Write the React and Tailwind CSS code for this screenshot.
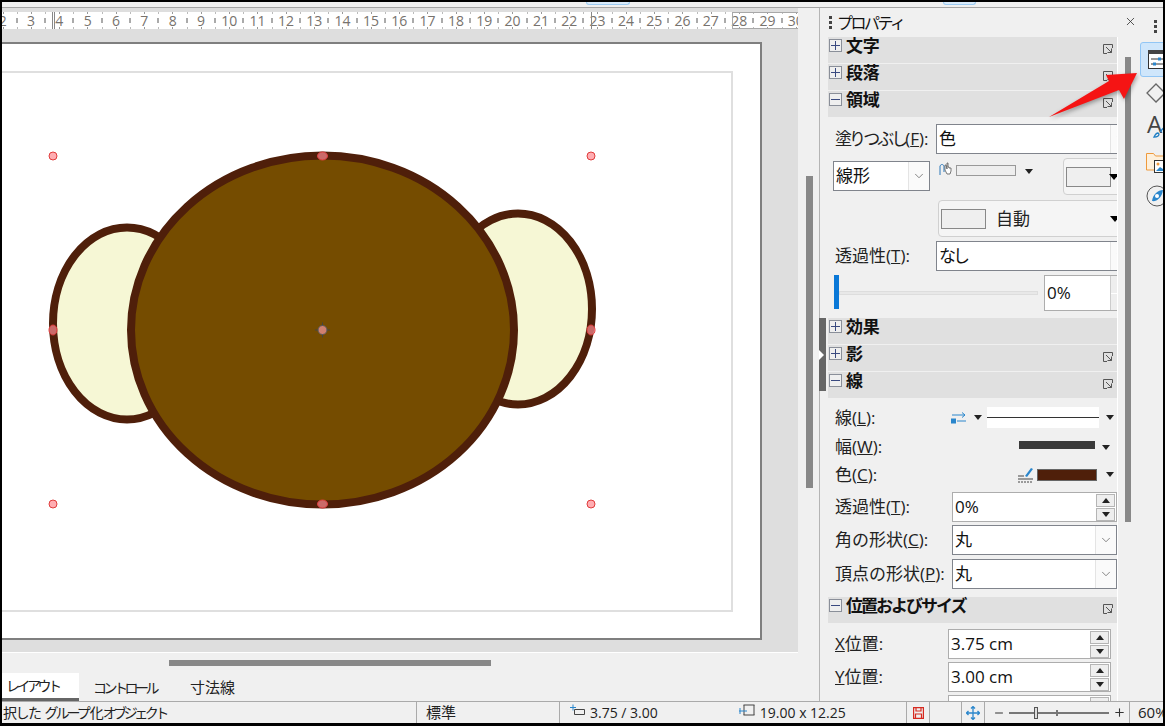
import { ChevronDown, Minus, Plus, X } from "lucide-react";

const rulerNums = [2, 3, 4, 5, 6, 7, 8, 9, 10, 11, 12, 13, 14, 15, 16, 17, 18, 19, 20, 21, 22, 23, 24, 25, 26, 27, 28, 29, 30];
const handles = [[53, 156], [591, 156], [53, 330], [591, 330], [53, 504], [591, 504]];

function Tri({ className = "" }) {
  return <span className={"block h-0 w-0 shrink-0 border-x-[4px] border-t-[5px] border-x-transparent border-t-[#222] " + className}></span>;
}

function Grip() {
  return (
    <div className="flex flex-col gap-[2px]">
      <span className="h-[3px] w-[3px] bg-[#444]"></span>
      <span className="h-[3px] w-[3px] bg-[#444]"></span>
      <span className="h-[3px] w-[3px] bg-[#444]"></span>
    </div>
  );
}

function SectionHead({ title, open, more = true, className = "", titleClass = "tracking-[-0.3px]" }) {
  return (
    <div className={"relative flex h-[27px] items-start border-b border-[#f0f0f0] bg-[#e0e0e0] " + className}>
      <span className="ml-px mt-[2px] flex h-[13px] w-[13px] items-center justify-center border border-[#8a8f99] bg-[#efefef]">
        <span className="relative block h-px w-[9px] bg-[#3a4a80]">
          {!open && <span className="absolute left-[4px] top-[-4px] block h-[9px] w-px bg-[#3a4a80]"></span>}
        </span>
      </span>
      <span className={"ml-[4px] mt-[-3.5px] text-[17px] font-bold leading-[24px] text-[#111] " + titleClass}>{title}</span>
      {more && (
        <svg className="absolute left-[275px] top-[7px]" width="10" height="10" viewBox="0 0 10 10" fill="none" stroke="#555">
          <path d="M9.5 4V.5H.5v9H4" />
          <path d="M3 3l5.5 5.5M8.500 4.500v4h-4" />
        </svg>
      )}
    </div>
  );
}

function Select({ value, className = "", box = "w-[196px]" }) {
  return (
    <div className={"flex h-[30px] shrink-0 border border-[#80848c] bg-white " + box + " " + className}>
      <span className="pl-[2px] text-[17px] leading-[28px] text-[#111]">{value}</span>
      <span className="ml-auto flex w-[21px] shrink-0 items-center justify-center border-l border-[#e4e4e4] bg-[#fafafa]">
        <ChevronDown size={14} strokeWidth={1.200} color="#555" />
      </span>
    </div>
  );
}

function Spin({ value, className = "" }) {
  return (
    <div className={"flex h-[30px] shrink-0 border border-[#adadad] bg-white " + className}>
      <span className="pl-[2px] text-[17px] leading-[28px] text-[#111]">{value}</span>
      <span className="ml-auto mr-px mt-px flex w-[19px] shrink-0 flex-col gap-px">
        <span className="flex h-[13px] items-center justify-center border border-[#b5b5b5] bg-[#eeeeee]">
          <Tri className="rotate-180" />
        </span>
        <span className="flex h-[13px] items-center justify-center border border-[#b5b5b5] bg-[#eeeeee]">
          <Tri />
        </span>
      </span>
    </div>
  );
}

function Label({ children, className = "" }) {
  return <span className={"shrink-0 whitespace-nowrap pl-[7px] text-[17px] leading-[24px] text-[#222] " + className}>{children}</span>;
}

function Drawing() {
  return (
    <svg className="absolute inset-0" width="757" height="594" viewBox="2 44 757 594">
      <ellipse cx="127" cy="323.500" rx="74" ry="96" fill="#f6f7d5" stroke="#4f1f0a" strokeWidth="8" />
      <ellipse cx="518" cy="309" rx="74" ry="95.500" fill="#f6f7d5" stroke="#4f1f0a" strokeWidth="8" />
      <ellipse cx="322.500" cy="330" rx="191.500" ry="174.500" fill="#754c00" stroke="#4f1f0a" strokeWidth="8" />
      {handles.map(([x, y]) => (
        <ellipse key={x + "-" + y} cx={x} cy={y} rx="4" ry={y === 330 ? 5 : 4} fill="#ff8a92" fillOpacity="0.7" stroke="#e03c3c" strokeWidth="1" />
      ))}
      <ellipse cx="322.500" cy="156" rx="5" ry="4" fill="#ff8a92" fillOpacity="0.7" stroke="#e03c3c" strokeWidth="1" />
      <ellipse cx="322.500" cy="504" rx="5" ry="4" fill="#ff8a92" fillOpacity="0.7" stroke="#e03c3c" strokeWidth="1" />
      <path d="M322.500 322.500v15M315 330h15" stroke="#444" strokeWidth="1" />
      <circle cx="322.500" cy="330" r="4.500" fill="#d08070" stroke="#555" strokeWidth="1" />
    </svg>
  );
}

function Ruler() {
  return (
    <div className="relative flex h-[17px] overflow-hidden bg-white">
      <div className="ml-[-13.5px] flex shrink-0">
        {rulerNums.map((n) => (
          <span key={n} className="relative w-[28.33px] shrink-0 text-center text-[14px] leading-[17px] text-[#77726d]">
            {n}
            <span className="absolute right-[-1px] top-[6px] h-[5px] w-[2px] bg-[#aaa]"></span>
            <span className="absolute left-[14px] top-0 h-[2px] w-px bg-[#999]"></span>
            <span className="absolute left-[14px] bottom-0 h-[2px] w-px bg-[#999]"></span>
            <span className="absolute left-0 top-0 h-[2px] w-px bg-[#bbb]"></span>
            <span className="absolute left-0 bottom-0 h-[2px] w-px bg-[#bbb]"></span>
          </span>
        ))}
      </div>
      <span className="absolute left-[50px] top-0 h-full w-[3px] border-x border-[#888]"></span>
      <span className="absolute left-[589px] top-0 h-full w-px bg-[#888]"></span>
      <span className="absolute left-[730px] top-0 h-full w-[67px] border border-r-0 border-[#a8a8a8]"></span>
    </div>
  );
}

function TabBar() {
  return (
    <div className="flex w-[23px] shrink-0 flex-col overflow-hidden">
      <div className="ml-[14px] mt-[12px]">
        <Grip />
      </div>
      <div className="mt-[9px] flex h-[35px] w-[40px] shrink-0 items-center rounded-l-[3px] border border-[#92c6f5] bg-[#cfe6fb] pl-[7px]">
        <svg width="22" height="19" viewBox="0 0 22 19" className="shrink-0">
          <rect x=".5" y=".5" width="21" height="18" fill="#fff" stroke="#333" />
          <rect x="0" y="0" width="22" height="4" fill="#444" />
          <path d="M3 9h12M3 14h12" stroke="#333" />
          <rect x="10" y="7.500" width="3" height="3" fill="#2a86cc" />
          <rect x="5" y="12.500" width="3" height="3" fill="#2a86cc" />
        </svg>
      </div>
      <svg className="ml-[5px] mt-[5px] shrink-0" width="22" height="22" viewBox="0 0 22 22" fill="none" stroke="#666" strokeWidth="1.300">
        <path d="M11 2l9 9-9 9-9-9z" />
      </svg>
      <div className="relative ml-[7px] mt-[7px] h-[28px] shrink-0">
        <span className="text-[24px] leading-[26px] text-[#444]">A</span>
        <svg className="absolute left-[5px] top-[12px]" width="16" height="16" viewBox="0 0 16 16" fill="none" stroke="#1f7fc4" strokeWidth="1.300">
          <path d="M2 14c3 0 5-1 5-3l-1-1c-2 0-3 2-4 4zM8 9l7-8" />
        </svg>
      </div>
      <svg className="ml-[6px] mt-[12px] shrink-0" width="22" height="22" viewBox="0 0 22 22">
        <path d="M.5 19V2.500h7l2 2.500h12v14z" fill="#fdf0dc" stroke="#ef9a3c" />
        <rect x="8.500" y="9.500" width="13" height="12" fill="#fff" stroke="#333" />
        <circle cx="12" cy="13" r="1.500" fill="#ef9a3c" />
        <path d="M10 20l4-4 3 2 4-4v6z" fill="#2a86cc" />
      </svg>
      <svg className="ml-[6px] mt-[12px] shrink-0" width="22" height="22" viewBox="0 0 22 22" fill="none">
        <circle cx="11" cy="11" r="10" stroke="#555" />
        <path d="M17 5c-5 0-10 4-11 11 4 1 10-3 11-11z" fill="#2a86cc" />
        <circle cx="11" cy="11" r="2" fill="#fff" />
      </svg>
    </div>
  );
}

function StatusBar() {
  return (
    <div className="flex h-[22px] shrink-0 border-t border-[#aaa] bg-[#f0f0f0] text-[14px] leading-[21px] text-[#222]">
      <div className="w-[414px] shrink-0 overflow-hidden whitespace-nowrap pl-px">
        <span className="tracking-[-1.500px]">択した</span>
        <span className="ml-[4px] tracking-[-3px]">グループ</span>
        <span className="ml-[2px] tracking-[-1px]">化</span>
        <span className="tracking-[-3.500px]">オブジェクト</span>
      </div>
      <div className="w-[143px] shrink-0 border-l border-[#aaa] pl-[9px] text-[15px]">標準</div>
      <div className="flex w-[347px] shrink-0 items-center border-l border-[#aaa] pl-[10px]">
        <svg className="mt-[-5px]" width="15" height="12" viewBox="0 0 15 12" fill="none">
          <path d="M0 3.500h6M3 .5v6" stroke="#2a86cc" />
          <path d="M4.500 5.500h10v5h-10z" stroke="#444" fill="#f0f0f0" />
        </svg>
        <span className="ml-[5px]">3.75 / 3.00</span>
        <svg className="ml-[81px] mt-[-4px]" width="16" height="14" viewBox="0 0 16 14" fill="none">
          <path d="M4.500 1h11M4.500 11h11M5 1v10M15 1v10" stroke="#444" />
          <path d="M0 7h8M1 4v6" stroke="#2a86cc" />
        </svg>
        <span className="ml-[5px]">19.00 x 12.25</span>
      </div>
      <div className="flex w-[23px] shrink-0 items-center justify-center border-l border-[#aaa]">
        <svg width="11" height="12" viewBox="0 0 11 12" fill="none" stroke="#d62a20" strokeWidth="1.200">
          <path d="M.6.6h9.800v10.800H.6zM3 .6v3.400h5V.6M2.500 11.400V7h6v4.400" />
        </svg>
      </div>
      <div className="w-[32px] shrink-0 border-l border-[#aaa]"></div>
      <div className="flex w-[23px] shrink-0 items-center justify-center border-l border-[#aaa]">
        <svg width="14" height="14" viewBox="0 0 14 14" fill="none" stroke="#2a86cc" strokeWidth="1.300">
          <path d="M7 .5v13M.5 7h13M5 2.500l2-2 2 2M5 11.500l2 2 2-2M2.500 5l-2 2 2 2M11.500 5l2 2-2 2" />
        </svg>
      </div>
      <div className="flex w-[145px] shrink-0 items-center border-l border-[#aaa] pl-[8px]">
        <Minus size={12} strokeWidth={2} color="#333" />
        <div className="relative ml-[4px] h-[2px] w-[100px] bg-[#777]">
          <span className="absolute left-[25px] top-[-5px] h-[12px] w-[4px] border border-[#555] bg-[#ddd]"></span>
          <span className="absolute left-[47px] top-[-2px] h-[6px] w-[2px] bg-[#777]"></span>
        </div>
        <Plus size={13} strokeWidth={2} color="#333" className="ml-[4px]" />
      </div>
      <div className="flex-1 overflow-hidden whitespace-nowrap border-l border-[#aaa] pl-[8px] text-[15px]">60%</div>
    </div>
  );
}

export default function App() {
  return (
    <div className="relative box-border flex h-[726px] w-[1165px] flex-col overflow-hidden border-x-2 border-b-[3px] border-t-2 border-black bg-[#f0f0f0] font-['Open_Sans','Noto_Sans_CJK_JP',sans-serif]">
      {/* top strip */}
      <div className="flex h-[6px] shrink-0 border-b border-[#a4a4a4]">
        <span className="ml-[584px] h-[3px] w-[44px] rounded-b-[3px] border border-t-0 border-[#9ccbf2] bg-[#d9ebfb]"></span>
        <span className="ml-[313px] h-[3px] w-[33px] rounded-b-[3px] border border-t-0 border-[#9ccbf2] bg-[#d9ebfb]"></span>
      </div>

      <div className="flex min-h-0 flex-1">
        {/* editor */}
        <div className="flex w-[796px] shrink-0 flex-col">
          <div className="h-[4px] shrink-0 bg-[#dedede]"></div>
          <Ruler />
          <div className="h-[624px] shrink-0 border-b border-white bg-[#dedede] pt-[13px]">
            <div className="relative box-border h-[598px] w-[760px] border-y-2 border-r-2 border-[#7f7f7f] bg-white pb-[26px] pr-[27px] pt-[27px]">
              <div className="h-full border-2 border-l-0 border-[#dfdfdf]"></div>
              <Drawing />
            </div>
          </div>
          <div className="flex min-h-0 flex-1 flex-col justify-between">
            <div className="ml-[167px] mt-[7px] h-[6px] w-[322px] bg-[#888]"></div>
            <div className="flex h-[28px] items-end text-[14px] tracking-[-3.500px] text-[#222]">
              <div className="flex h-full w-[77px] items-center border-b-[3px] border-[#666] bg-white pl-[4px]">レイアウト</div>
              <div className="ml-[14px] flex h-full items-center">コントロール</div>
              <div className="ml-[34px] flex h-full items-center text-[15px] tracking-[0px]">寸法線</div>
            </div>
          </div>
        </div>

        {/* editor scrollbar */}
        <div className="w-[21px] shrink-0 pl-[8px] pt-[168px]">
          <div className="h-[312px] w-[7px] bg-[#888]"></div>
        </div>

        {/* sidebar */}
        <div className="relative flex min-w-0 flex-1 border-l border-[#b4b4b4]">
          <div className="absolute left-[-1px] top-[310px] flex h-[73px] w-[7px] items-center bg-[#666]">
            <span className="block h-0 w-0 border-y-[5px] border-l-[5px] border-y-transparent border-l-white"></span>
          </div>
          <div className="flex w-[320px] shrink-0 flex-col">
            <div className="flex h-[29px] shrink-0 items-center pl-[9px]">
              <Grip />
              <span className="ml-[5px] text-[16px] tracking-[-2.500px] text-[#111]">プロパティ</span>
              <X size={13} strokeWidth={1.500} color="#333" className="ml-auto mr-[3px] mt-[-3px]" />
            </div>
            <div className="flex min-h-0 flex-1">
              <div className="ml-[8px] w-[290px] shrink-0 overflow-hidden border-r border-white">
                <SectionHead title="文字" />
                <SectionHead title="段落" />
                <SectionHead title="領域" open />

                <div className="mt-[6px] flex items-center">
                  <Label className="w-[108px]"><span className="tracking-[-3px]">塗りつぶし</span>(<u>F</u>):</Label>
                  <Select value="色" />
                </div>
                <div className="mt-[4px] flex h-[37px] items-start">
                  <Select value="線形" box="w-[97px]" className="ml-[5px] mt-[3px]" />
                  <svg className="ml-[9px] mt-[4px] shrink-0" width="16" height="14" viewBox="0 0 16 14" fill="none">
                    <path d="M1 13V4c1-2 3-2 4 0v6" stroke="#2a76b8" />
                    <path d="M8 12l-2-4V3h1l1 4V1h1v4l1 0v1l2 0v3l-1 3z" fill="#fff" stroke="#555" strokeWidth=".8" />
                  </svg>
                  <span className="ml-px mt-[7px] h-[11px] w-[60px] shrink-0 border border-[#999] bg-[#eee]"></span>
                  <Tri className="ml-[9px] mt-[11px]" />
                  <div className="ml-[30px] flex h-[37px] w-[70px] shrink-0 items-center rounded-[4px] border border-[#d0d0d0] bg-[#f5f5f5] pl-[2px]">
                    <span className="h-[20px] w-[45px] shrink-0 border border-[#888] bg-[#efefef]"></span>
                    <span className="ml-[-2px] block h-0 w-0 border-x-[5px] border-t-[6px] border-x-transparent border-t-black"></span>
                  </div>
                </div>
                <div className="ml-[110px] mt-[5px] flex h-[37px] w-[210px] items-center rounded-[4px] border border-[#d0d0d0] bg-[#f5f5f5] pl-[2px]">
                  <span className="h-[20px] w-[45px] shrink-0 border border-[#888] bg-[#efefef]"></span>
                  <span className="ml-[10px] text-[17px] text-[#222]">自動</span>
                  <span className="ml-[80px] block h-0 w-0 border-x-[5px] border-t-[6px] border-x-transparent border-t-black"></span>
                </div>
                <div className="mt-[4px] flex items-center">
                  <Label className="w-[108px]">透過性(<u>T</u>):</Label>
                  <Select value={<span className="tracking-[-3px]">なし</span>} />
                </div>
                <div className="mt-[4px] flex h-[36px] items-start">
                  <span className="ml-[6px] h-[34px] w-[5px] shrink-0 bg-[#0a78d7]"></span>
                  <span className="mt-[16px] h-[4px] w-[199px] shrink-0 border border-[#ddd] bg-[#e8e8e8]"></span>
                  <div className="ml-[6px] flex h-[36px] w-[90px] shrink-0 border border-[#adadad] bg-white">
                    <span className="pl-[2px] text-[17px] leading-[34px] text-[#111]">0%</span>
                    <span className="ml-[39px] flex w-[12px] flex-col gap-px border-l border-[#ccc]">
                      <span className="flex-1 bg-[#eee]"></span>
                      <span className="flex-1 bg-[#eee]"></span>
                    </span>
                  </div>
                </div>

                <SectionHead title="効果" more={false} className="mt-[7px]" />
                <SectionHead title="影" />
                <SectionHead title="線" open />

                <div className="mt-[8px] flex h-[21px] items-center">
                  <Label className="flex-1">線(<u>L</u>):</Label>
                  <svg className="shrink-0" width="16" height="12" viewBox="0 0 16 12" fill="none">
                    <path d="M1 3h13M11 .5L14 3l-3 2.500" stroke="#2a86cc" />
                    <path d="M6 9h9" stroke="#2a86cc" />
                    <rect x="0" y="6.500" width="5" height="5" fill="#2a86cc" />
                  </svg>
                  <Tri className="ml-[7px]" />
                  <div className="ml-[5px] flex h-[21px] w-[112px] shrink-0 items-center bg-white">
                    <span className="h-px w-full bg-[#333]"></span>
                  </div>
                  <Tri className="ml-[7px] mr-[3px]" />
                </div>
                <div className="mt-[6px] flex h-[26px] items-center">
                  <Label className="flex-1">幅(<u>W</u>):</Label>
                  <span className="mt-[-5px] h-[8px] w-[76px] shrink-0 bg-[#3a3a3a]"></span>
                  <Tri className="ml-[7px] mr-[7px]" />
                </div>
                <div className="mt-px flex h-[27px] items-center">
                  <Label className="flex-1">色(<u>C</u>):</Label>
                  <svg className="shrink-0" width="16" height="16" viewBox="0 0 16 16" fill="none">
                    <path d="M0 9h6M0 12h15" stroke="#444" />
                    <path d="M0 15h15" stroke="#444" strokeDasharray="2 1" />
                    <path d="M7 9l6-8 2 1-6 8z" fill="#2a86cc" />
                  </svg>
                  <span className="ml-[3px] h-[12px] w-[60px] shrink-0 border border-[#666] bg-[#4f1f0a]"></span>
                  <Tri className="ml-[9px] mr-[3px]" />
                </div>
                <div className="mt-[4px] flex items-center">
                  <Label className="w-[124px]">透過性(<u>T</u>):</Label>
                  <Spin value="0%" className="w-[165px]" />
                </div>
                <div className="mt-[3px] flex items-center">
                  <Label className="w-[124px]">角の形状(<u>C</u>):</Label>
                  <Select value="丸" box="w-[165px]" />
                </div>
                <div className="mt-[4px] flex items-center">
                  <Label className="w-[124px]">頂点の形状(<u>P</u>):</Label>
                  <Select value="丸" box="w-[165px]" />
                </div>

                <SectionHead title="位置およびサイズ" open className="mt-[8px]" titleClass="tracking-[-2px]" />

                <div className="mt-[5px] flex items-center">
                  <Label className="w-[120px]"><u>X</u>位置:</Label>
                  <Spin value="3.75 cm" className="w-[163px]" />
                </div>
                <div className="mt-[3px] flex items-center">
                  <Label className="w-[120px]"><u>Y</u>位置:</Label>
                  <Spin value="3.00 cm" className="w-[163px]" />
                </div>
                <div className="mt-[3px] flex items-center">
                  <span className="w-[120px] shrink-0"></span>
                  <Spin value="" className="w-[163px]" />
                </div>
              </div>
              <div className="ml-[7px] mt-[20px] h-[465px] w-[6px] shrink-0 bg-[#888]"></div>
            </div>
          </div>
          <TabBar />
        </div>
      </div>

      <StatusBar />

      {/* red annotation arrow */}
      <svg className="absolute left-[1040px] top-[60px] drop-shadow-[1px_2px_2px_rgba(0,0,0,0.35)]" width="100" height="60" viewBox="1040 60 100 60">
        <path d="M1135 71L1104 73 1107 79 1047 115 1117 88 1122 97z" fill="#f51414" />
      </svg>
    </div>
  );
}
